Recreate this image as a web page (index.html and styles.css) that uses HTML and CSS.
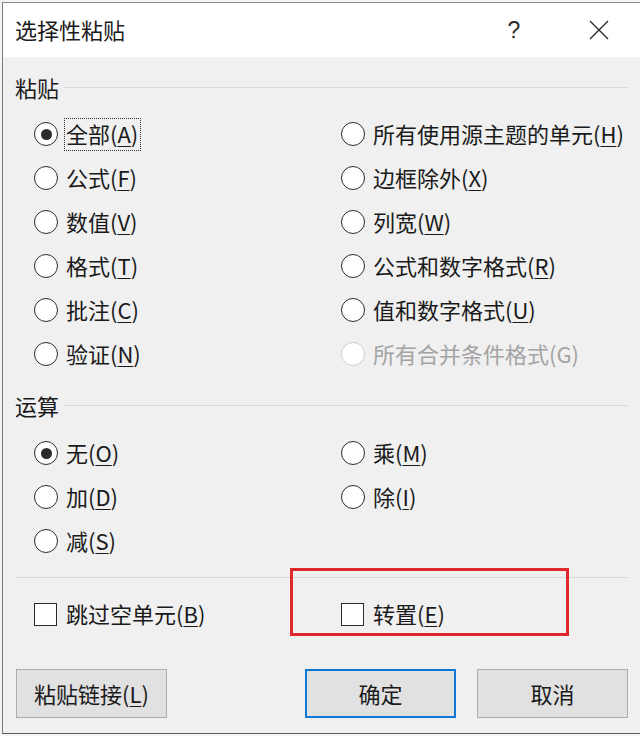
FILE: index.html
```html
<!DOCTYPE html>
<html lang="zh-CN">
<head>
<meta charset="utf-8">
<title>选择性粘贴</title>
<link rel="stylesheet" href="styles.css">
</head>
<body>
<div class="dialog">
  <div class="titlebar">
    <span class="title">选择性粘贴</span>
    <span class="help">?</span>
    <svg class="close" width="20" height="20" viewBox="0 0 20 20"><path d="M1 1 L19 19 M19 1 L1 19" stroke="#222" stroke-width="1.2" fill="none"/></svg>
  </div>
  <div class="content">
    <div class="group-head"><span>粘贴</span><i class="rule"></i></div>
    <div class="grid paste">
      <div class="opt"><span class="radio on"></span><span class="lbl focus">全部(<u>A</u>)</span></div>
      <div class="opt"><span class="radio"></span><span class="lbl">所有使用源主题的单元(<u>H</u>)</span></div>
      <div class="opt"><span class="radio"></span><span class="lbl">公式(<u>F</u>)</span></div>
      <div class="opt"><span class="radio"></span><span class="lbl">边框除外(<u>X</u>)</span></div>
      <div class="opt"><span class="radio"></span><span class="lbl">数值(<u>V</u>)</span></div>
      <div class="opt"><span class="radio"></span><span class="lbl">列宽(<u>W</u>)</span></div>
      <div class="opt"><span class="radio"></span><span class="lbl">格式(<u>T</u>)</span></div>
      <div class="opt"><span class="radio"></span><span class="lbl">公式和数字格式(<u>R</u>)</span></div>
      <div class="opt"><span class="radio"></span><span class="lbl">批注(<u>C</u>)</span></div>
      <div class="opt"><span class="radio"></span><span class="lbl">值和数字格式(<u>U</u>)</span></div>
      <div class="opt"><span class="radio"></span><span class="lbl">验证(<u>N</u>)</span></div>
      <div class="opt disabled"><span class="radio"></span><span class="lbl">所有合并条件格式(G)</span></div>
    </div>
    <div class="group-head second"><span>运算</span><i class="rule"></i></div>
    <div class="grid ops">
      <div class="opt"><span class="radio on"></span><span class="lbl">无(<u>O</u>)</span></div>
      <div class="opt"><span class="radio"></span><span class="lbl">乘(<u>M</u>)</span></div>
      <div class="opt"><span class="radio"></span><span class="lbl">加(<u>D</u>)</span></div>
      <div class="opt"><span class="radio"></span><span class="lbl">除(<u>I</u>)</span></div>
      <div class="opt"><span class="radio"></span><span class="lbl">减(<u>S</u>)</span></div>
    </div>
    <div class="sep"></div>
    <div class="grid checks">
      <div class="opt"><span class="check"></span><span class="lbl">跳过空单元(<u>B</u>)</span></div>
      <div class="opt"><span class="check"></span><span class="lbl">转置(<u>E</u>)</span></div>
    </div>
    <div class="buttons">
      <button class="btn">粘贴链接(<u>L</u>)</button>
      <span class="spacer"></span>
      <button class="btn default">确定</button>
      <button class="btn cancel">取消</button>
    </div>
  </div>
  <div class="annot"></div>
</div>
</body>
</html>
```
FILE: styles.css
```css
* { box-sizing: border-box; }
html, body { margin: 0; padding: 0; }
body {
  background: #f4f4f4;
  padding: 2px 0 0 2px;
  font-family: "Noto Sans CJK SC", "Noto Sans", sans-serif;
  color: #1a1a1a;
}
.dialog {
  position: relative;
  width: 638px;
  border-top: 1px solid #8a8a8a;
  border-left: 1px solid #7a7a7a;
  border-bottom: 1px solid #5e5e5e;
  background: #f0f0f0;
}
.titlebar {
  height: 54px;
  background: #ffffff;
  display: flex;
  align-items: center;
  padding-left: 12px;
}
.title {
  font-size: 22px;
  line-height: 28px;
  padding-bottom: 2px;
}
.help {
  margin-left: auto;
  width: 14px;
  text-align: center;
  font-family: "Liberation Sans", sans-serif;
  font-size: 23px;
  line-height: 30px;
  color: #2a2a2a;
}
.close {
  margin-left: 68px;
  margin-right: 31px;
}
.content {
  padding: 9px 12px 15px 12px;
}
.group-head {
  height: 44px;
  display: flex;
  align-items: center;
  font-size: 22px;
  line-height: 28px;
}
.group-head span { padding-bottom: 2px; }
.group-head.second { margin-top: 8px; }
.rule {
  flex: 1;
  height: 1px;
  background: #d9d9d9;
  margin-left: 5px;
  margin-top: -2px;
}
.grid {
  display: grid;
  grid-template-columns: 307px 1fr;
  grid-auto-rows: 44px;
  padding-left: 19px;
}
.paste { margin-top: 2px; }
.ops { margin-top: 3px; }
.checks { margin-top: 14px; }
.opt {
  display: flex;
  align-items: center;
  font-size: 22px;
}
.radio {
  width: 24px;
  height: 24px;
  border: 1.5px solid #2b2b2b;
  border-radius: 50%;
  background: #ffffff;
  flex: none;
  display: flex;
  align-items: center;
  justify-content: center;
}
.radio.on::after {
  content: "";
  width: 11px;
  height: 11px;
  border-radius: 50%;
  background: #2b2b2b;
}
.check {
  width: 23px;
  height: 23px;
  border: 1.5px solid #2b2b2b;
  background: #ffffff;
  flex: none;
}
.lbl {
  margin-left: 6px;
  padding: 0 2px 2px 1px;
  border: 1px dotted transparent;
  line-height: 29px;
  white-space: nowrap;
}
.check + .lbl { margin-left: 7px; }
.lbl.focus { border-color: #333333; }
u {
  text-decoration: underline;
  text-decoration-thickness: 1px;
  text-underline-offset: 3px;
}
.disabled .radio { border-color: #cdcdcd; }
.disabled .lbl { color: #a3a3a3; }
.sep {
  margin-top: 14px;
  height: 1px;
  background: #d9d9d9;
  margin-left: 1px;
}
.buttons {
  margin-top: 33px;
  display: flex;
  padding-left: 1px;
}
.spacer { flex: 1; }
.btn {
  width: 151px;
  height: 49px;
  background: #e1e1e1;
  border: 1px solid #adadad;
  font-family: "Noto Sans CJK SC", "Noto Sans", sans-serif;
  font-size: 22px;
  color: #1a1a1a;
  padding: 0 0 2px 0;
  line-height: 28px;
}
.btn.default { border: 2px solid #0a78d4; }
.btn.cancel { margin-left: 21px; }
.annot {
  position: absolute;
  left: 287px;
  top: 565px;
  width: 279px;
  height: 68px;
  border: 3px solid #e1282d;
}
```
